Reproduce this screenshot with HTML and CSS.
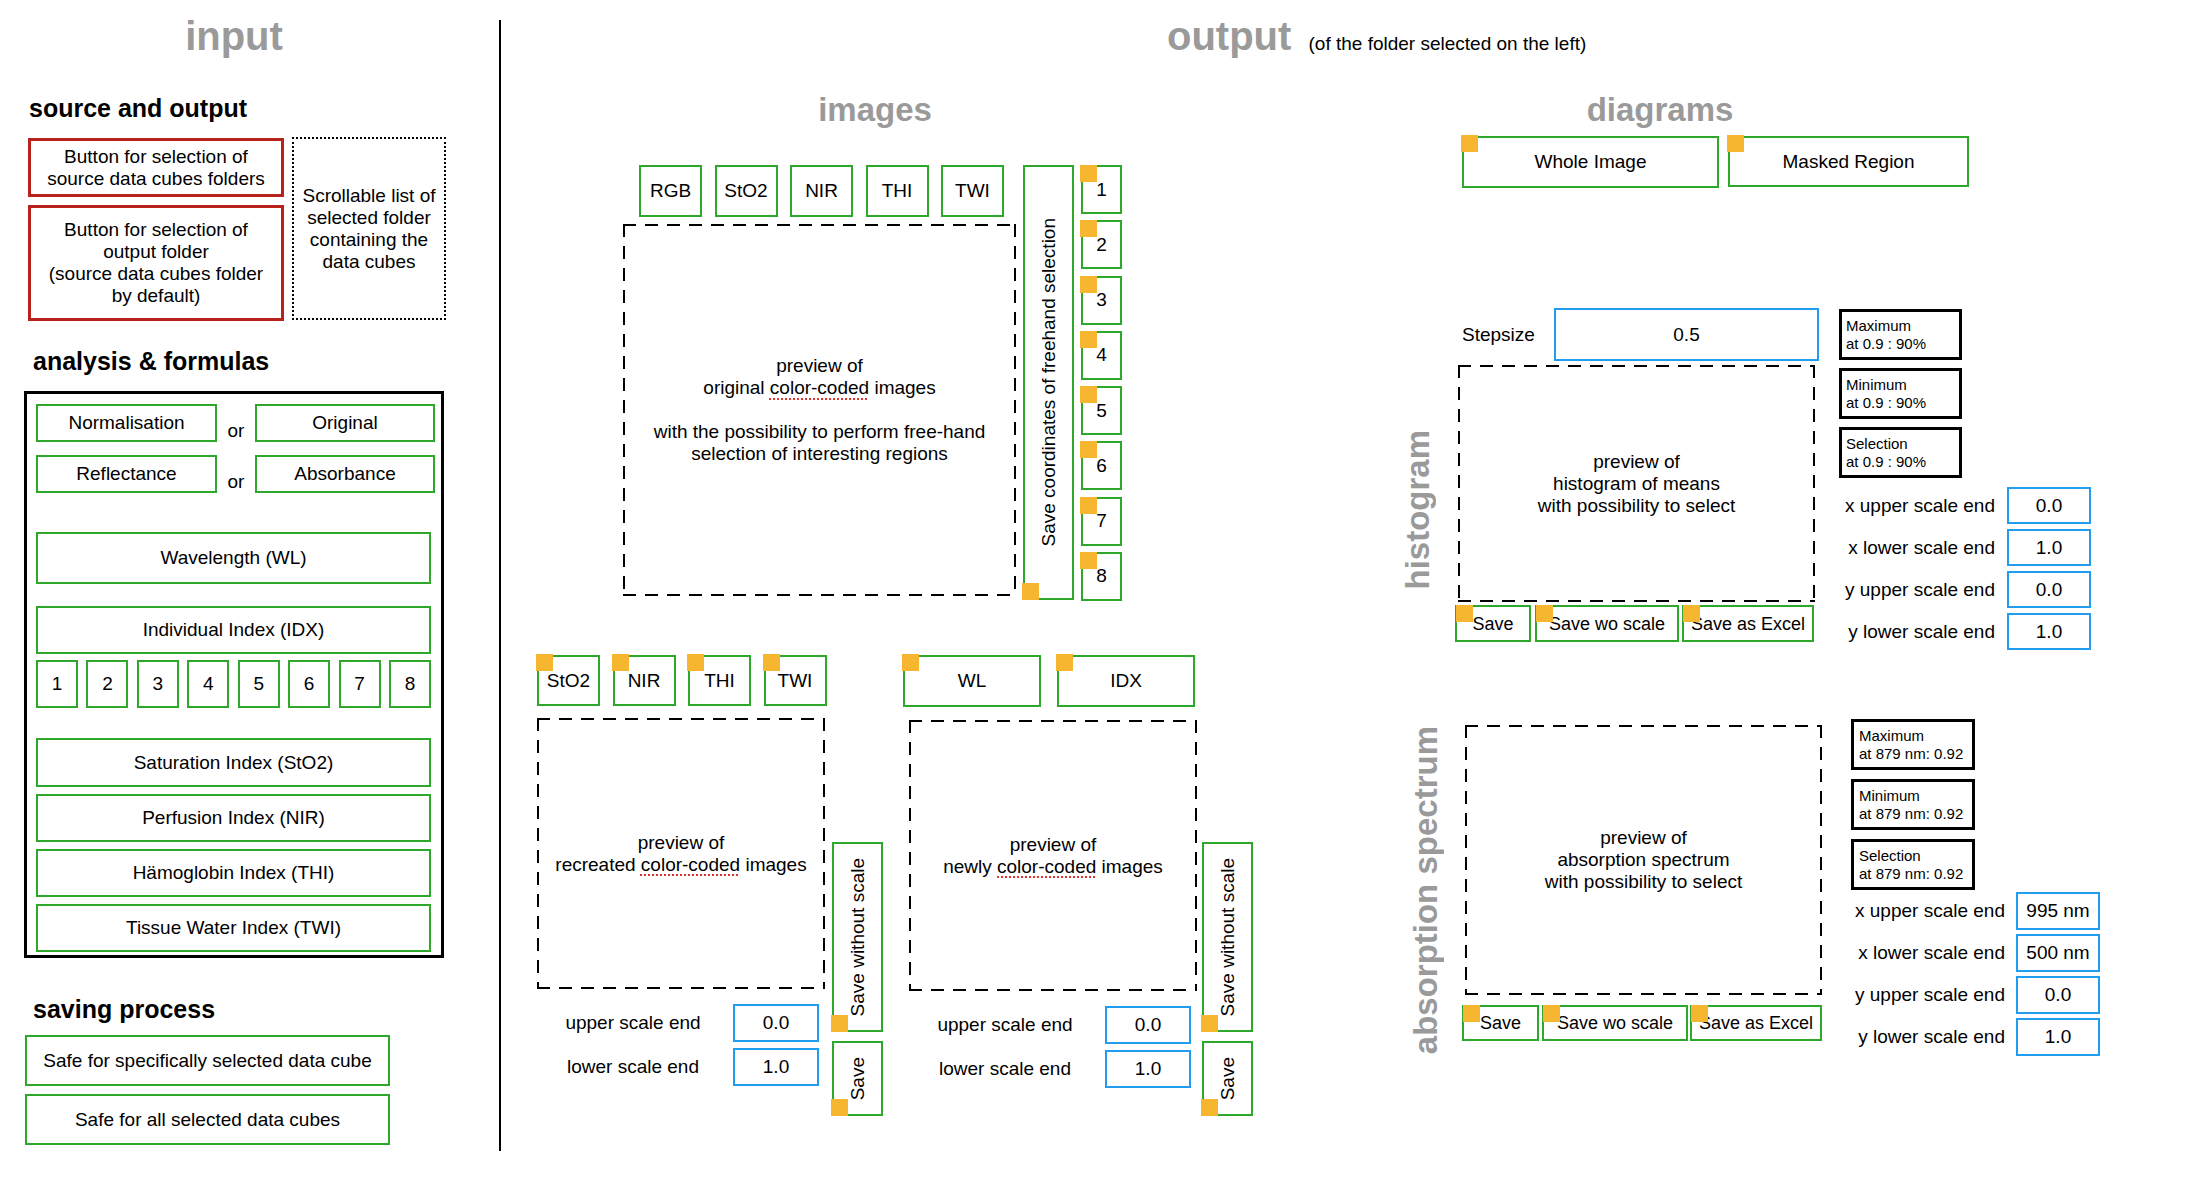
FILE: index.html
```html
<!DOCTYPE html>
<html lang="en">
<head>
  <meta charset="UTF-8">
  <title>Data Cube Viewer - Layout</title>
  <meta name="viewport" content="width=device-width,initial-scale=1">
  <link rel="stylesheet" href="styles.css">
</head>
<body>
<div class="page">

  <!-- left side: input -->
  <section class="input-col">
    <h1 class="title">input</h1>

    <h3 class="sect first">source and output</h3>
    <div class="source">
      <div class="source-btns">
        <div class="btn red src">Button for selection of<br>source data cubes folders</div>
        <div class="btn red dst">Button for selection of<br>output folder<br>(source data cubes folder<br>by default)</div>
      </div>
      <div class="folder-list">Scrollable list of<br>selected folder<br>containing the<br>data cubes</div>
    </div>

    <h3 class="sect">analysis &amp; formulas</h3>
    <div class="formulas">
      <div class="pair">
        <div class="btn green">Normalisation</div>
        <span class="or">or</span>
        <div class="btn green">Original</div>
      </div>
      <div class="pair second">
        <div class="btn green">Reflectance</div>
        <span class="or">or</span>
        <div class="btn green">Absorbance</div>
      </div>
      <div class="btn green wide wl">Wavelength (WL)</div>
      <div class="btn green wide idx">Individual Index (IDX)</div>
      <div class="idx-nums">
        <div class="btn green">1</div>
        <div class="btn green">2</div>
        <div class="btn green">3</div>
        <div class="btn green">4</div>
        <div class="btn green">5</div>
        <div class="btn green">6</div>
        <div class="btn green">7</div>
        <div class="btn green">8</div>
      </div>
      <div class="btn green wide index first-index">Saturation Index (StO2)</div>
      <div class="btn green wide index">Perfusion Index (NIR)</div>
      <div class="btn green wide index">Hämoglobin Index (THI)</div>
      <div class="btn green wide index">Tissue Water Index (TWI)</div>
    </div>

    <h3 class="sect saving">saving process</h3>
    <div class="btn green safe">Safe for specifically selected data cube</div>
    <div class="btn green safe second">Safe for all selected data cubes</div>
  </section>

  <div class="divider"></div>

  <!-- right side: output -->
  <section class="output-col">
    <h1 class="title out-title">output <span class="sub">(of the folder selected on the left)</span></h1>

    <div class="out-body">

      <div class="images">
        <h2 class="sub-title">images</h2>

        <div class="img-top">
          <div class="img-main">
            <div class="tabs">
              <div class="btn green tab">RGB</div>
              <div class="btn green tab">StO2</div>
              <div class="btn green tab">NIR</div>
              <div class="btn green tab">THI</div>
              <div class="btn green tab">TWI</div>
            </div>
            <div class="preview big">
              <p>preview of<br>original <span class="typo">color-coded</span> images<br><br>with the possibility to perform free-hand<br>selection of interesting regions</p>
            </div>
          </div>
          <div class="btn green vbtn coords"><span>Save coordinates of freehand selection</span><i class="mark bl"></i></div>
          <div class="num-col">
            <div class="btn green num"><i class="mark"></i>1</div>
            <div class="btn green num"><i class="mark"></i>2</div>
            <div class="btn green num"><i class="mark"></i>3</div>
            <div class="btn green num"><i class="mark"></i>4</div>
            <div class="btn green num"><i class="mark"></i>5</div>
            <div class="btn green num"><i class="mark"></i>6</div>
            <div class="btn green num"><i class="mark"></i>7</div>
            <div class="btn green num"><i class="mark"></i>8</div>
          </div>
        </div>

        <div class="img-bottom">
          <div class="grp grp-a">
            <div class="grp-main">
              <div class="tabs small-tabs">
                <div class="btn green tab2"><i class="mark"></i>StO2</div>
                <div class="btn green tab2"><i class="mark"></i>NIR</div>
                <div class="btn green tab2"><i class="mark"></i>THI</div>
                <div class="btn green tab2"><i class="mark"></i>TWI</div>
              </div>
              <div class="preview small">
                <p>preview of<br>recreated <span class="typo">color-coded</span> images</p>
              </div>
              <div class="scales">
                <span class="lbl">upper scale end</span><div class="field">0.0</div>
                <span class="lbl">lower scale end</span><div class="field">1.0</div>
              </div>
            </div>
            <div class="grp-side">
              <div class="btn green vbtn noscale"><span>Save without scale</span><i class="mark bl"></i></div>
              <div class="btn green vbtn save"><span>Save</span><i class="mark bl"></i></div>
            </div>
          </div>

          <div class="grp grp-b">
            <div class="grp-main">
              <div class="tabs wl-tabs">
                <div class="btn green tab3"><i class="mark"></i>WL</div>
                <div class="btn green tab3"><i class="mark"></i>IDX</div>
              </div>
              <div class="preview small">
                <p>preview of<br>newly <span class="typo">color-coded</span> images</p>
              </div>
              <div class="scales">
                <span class="lbl">upper scale end</span><div class="field">0.0</div>
                <span class="lbl">lower scale end</span><div class="field">1.0</div>
              </div>
            </div>
            <div class="grp-side">
              <div class="btn green vbtn noscale"><span>Save without scale</span><i class="mark bl"></i></div>
              <div class="btn green vbtn save"><span>Save</span><i class="mark bl"></i></div>
            </div>
          </div>
        </div>
      </div>

      <div class="diagrams">
        <h2 class="sub-title">diagrams</h2>

        <div class="diag-tabs">
          <div class="btn green whole"><i class="mark"></i>Whole Image</div>
          <div class="btn green masked"><i class="mark"></i>Masked Region</div>
        </div>

        <div class="chart hist">
          <div class="chart-label"><span>histogram</span></div>
          <div class="chart-main">
            <div class="step-row">
              <span class="step-lbl">Stepsize</span>
              <div class="field step">0.5</div>
            </div>
            <div class="preview chart-prev">
              <p>preview of<br>histogram of means<br>with possibility to select</p>
            </div>
            <div class="save-row">
              <div class="btn green s1"><i class="mark"></i>Save</div>
              <div class="btn green s2"><i class="mark"></i>Save wo scale</div>
              <div class="btn green s3"><i class="mark"></i>Save as Excel</div>
            </div>
          </div>
          <div class="chart-side">
            <div class="stats">
              <div class="stat">Maximum<br>at 0.9 : 90%</div>
              <div class="stat">Minimum<br>at 0.9 : 90%</div>
              <div class="stat">Selection<br>at 0.9 : 90%</div>
            </div>
            <div class="axis">
              <span class="lbl">x upper scale end</span><div class="field">0.0</div>
              <span class="lbl">x lower scale end</span><div class="field">1.0</div>
              <span class="lbl">y upper scale end</span><div class="field">0.0</div>
              <span class="lbl">y lower scale end</span><div class="field">1.0</div>
            </div>
          </div>
        </div>

        <div class="chart spectrum">
          <div class="chart-label"><span>absorption spectrum</span></div>
          <div class="chart-main">
            <div class="preview chart-prev">
              <p>preview of<br>absorption spectrum<br>with possibility to select</p>
            </div>
            <div class="save-row">
              <div class="btn green s1"><i class="mark"></i>Save</div>
              <div class="btn green s2"><i class="mark"></i>Save wo scale</div>
              <div class="btn green s3"><i class="mark"></i>Save as Excel</div>
            </div>
          </div>
          <div class="chart-side">
            <div class="stats">
              <div class="stat">Maximum<br>at 879 nm: 0.92</div>
              <div class="stat">Minimum<br>at 879 nm: 0.92</div>
              <div class="stat">Selection<br>at 879 nm: 0.92</div>
            </div>
            <div class="axis">
              <span class="lbl">x upper scale end</span><div class="field">995 nm</div>
              <span class="lbl">x lower scale end</span><div class="field">500 nm</div>
              <span class="lbl">y upper scale end</span><div class="field">0.0</div>
              <span class="lbl">y lower scale end</span><div class="field">1.0</div>
            </div>
          </div>
        </div>
      </div>

    </div>
  </section>
</div>
</body>
</html>
```

FILE: styles.css
```css
body { margin: 0; background: #fff; color: #000; font-family: "Liberation Sans", Arial, sans-serif; font-size: 19px; line-height: 22px; }
h1, h2, h3, p { margin: 0; }
.page { display: flex; width: 2196px; height: 1186px; overflow: hidden; }

/* generic boxes */
.btn { position: relative; display: flex; align-items: center; justify-content: center; text-align: center; box-sizing: border-box; }
.green { border: 2px solid #2ea82a; }
.red { border: 3px solid #b9221c; }
.field { display: flex; align-items: center; justify-content: center; box-sizing: border-box; border: 2px solid #229cf0; height: 38px; }
.mark { position: absolute; top: -3px; left: -3px; width: 17px; height: 17px; background: #f6b62f; }
.mark.bl { top: auto; bottom: -2px; }
.vbtn span { writing-mode: vertical-rl; transform: rotate(180deg); white-space: nowrap; }

.preview {
  display: flex; align-items: center; justify-content: center; text-align: center; box-sizing: border-box;
  background:
    linear-gradient(90deg, #000 13px, transparent 13px) top left / 22px 2px repeat-x,
    linear-gradient(90deg, #000 13px, transparent 13px) bottom left / 22px 2px repeat-x,
    linear-gradient(#000 13px, transparent 13px) top left / 2px 22px repeat-y,
    linear-gradient(#000 13px, transparent 13px) top right / 2px 22px repeat-y;
}
.typo { text-decoration: underline dotted #e0342c; text-decoration-thickness: 1.5px; text-underline-offset: 4px; }

/* titles */
.title { padding-top: 12px; font-size: 40px; line-height: 48px; font-weight: bold; color: #9a9a9a; }
.sub-title { margin-top: 30px; font-size: 33px; line-height: 40px; font-weight: bold; color: #9a9a9a; text-align: center; }
.sect { margin: 25px 0 15px 9px; font-size: 25px; line-height: 30px; font-weight: bold; }
.sect.first { margin: 33px 0 14px 5px; }
.sect.saving { margin: 36px 0 11px 9px; }

/* input column */
.input-col { width: 499px; flex-shrink: 0; padding-left: 24px; box-sizing: border-box; }
.input-col .title { width: 420px; text-align: center; }
.source { display: flex; margin-left: 4px; }
.source-btns { display: flex; flex-direction: column; gap: 8px; margin-top: 1px; }
.src { width: 256px; height: 59px; }
.dst { width: 256px; height: 116px; }
.folder-list { display: flex; align-items: center; justify-content: center; text-align: center; margin-left: 8px; width: 154px; height: 183px; box-sizing: border-box; border: 2px dotted #000; }

.formulas { width: 420px; box-sizing: border-box; border: 3px solid #000; padding: 10px 6px 3px 9px; }
.pair { display: grid; grid-template-columns: 181px 1fr 180px; height: 38px; }
.pair.second { margin-top: 13px; }
.or { align-self: end; text-align: center; }
.wide { width: 395px; height: 48px; margin-top: 7px; }
.wl { height: 52px; margin-top: 39px; }
.idx { margin-top: 22px; }
.idx-nums { display: flex; justify-content: space-between; width: 395px; margin-top: 6px; }
.idx-nums .btn { width: 42px; height: 48px; }
.first-index { margin-top: 30px; height: 49px; }
.safe { width: 365px; height: 51px; margin-left: 1px; }
.safe.second { margin-top: 8px; }

.divider { width: 2px; height: 1131px; margin-top: 20px; background: #000; flex-shrink: 0; }

/* output column */
.output-col { flex: 1; }
.out-title { padding-left: 666px; }
.out-title .sub { margin-left: 6px; font-size: 19px; line-height: 22px; font-weight: normal; color: #000; }
.out-body { display: flex; }

.images { width: 676px; margin-left: 36px; flex-shrink: 0; }
.img-top { display: flex; gap: 7px; margin: 35px 0 0 86px; }
.img-main { width: 393px; }
.tabs { display: flex; gap: 12.5px; margin-left: 16px; }
.tab { width: 63px; height: 52px; }
.preview.big { width: 393px; height: 372px; margin-top: 7px; }
.coords { width: 51px; height: 435px; }
.num-col { display: flex; flex-direction: column; justify-content: space-between; height: 436px; }
.num { width: 41px; height: 49px; }
.num .mark { top: -2px; }

.img-bottom { display: flex; gap: 20px; margin-top: 54px; }
.grp { display: flex; gap: 5px; }
.grp-a .grp-main { width: 290px; }
.grp-b .grp-main { width: 294px; }
.small-tabs { margin-left: 0; }
.tab2 { width: 63px; height: 51px; }
.wl-tabs { margin-left: 0; gap: 16px; }
.tab3 { width: 138px; height: 52px; }
.preview.small { width: 288px; height: 271px; margin-top: 12px; }
.grp-b .preview.small { margin: 13px 0 0 6px; }
.scales { display: grid; grid-template-columns: 192px 86px; column-gap: 4px; row-gap: 6px; margin-top: 15px; }
.grp-b .scales { margin-left: 6px; }
.scales .lbl { align-self: center; text-align: center; }
.grp-side { display: flex; flex-direction: column; gap: 9px; margin-top: 187px; }
.noscale { width: 51px; height: 190px; }
.save { width: 51px; height: 75px; }

/* diagrams */
.diagrams { width: 700px; margin-left: 187px; flex-shrink: 0; }
.diagrams .sub-title { width: 520px; }
.diag-tabs { display: flex; gap: 9px; margin: 6px 0 0 62px; }
.whole { width: 257px; height: 52px; }
.masked { width: 241px; height: 51px; }

.chart { display: flex; }
.chart.hist { margin-top: 120px; }
.chart.spectrum { margin-top: 69px; }
.chart-label { display: flex; flex-direction: column; justify-content: center; box-sizing: border-box; font-size: 33px; line-height: 33px; font-weight: bold; color: #9a9a9a; }
.chart-label span { writing-mode: vertical-rl; transform: rotate(180deg); white-space: nowrap; }
.hist .chart-label { width: 55px; padding: 61px 0 0 1px; }
.spectrum .chart-label { width: 64px; padding: 6px 0 0 9px; }

.hist .chart-main { width: 364px; }
.spectrum .chart-main { width: 360px; margin-top: 6px; }
.step-row { display: flex; align-items: center; height: 53px; margin-left: 7px; }
.step-lbl { width: 92px; }
.field.step { width: 265px; height: 53px; }
.chart-prev { width: 357px; margin-left: 3px; }
.hist .chart-prev { height: 237px; margin-top: 4px; }
.spectrum .chart-prev { height: 270px; }
.save-row { display: flex; font-size: 18px; }
.hist .save-row { margin-top: 3px; }
.spectrum .save-row { margin-top: 10px; }
.save-row .btn { height: 37px; }
.save-row .mark { top: -2px; left: -1px; }
.hist .s1 { width: 76px; }
.hist .s2 { width: 144px; margin-left: 4px; }
.hist .s3 { width: 132px; margin-left: 3px; }
.spectrum .save-row .btn { height: 36px; }
.spectrum .s1 { width: 77px; }
.spectrum .s2 { width: 146px; margin-left: 3px; }
.spectrum .s3 { width: 132px; margin-left: 2px; }

.stats { display: flex; flex-direction: column; }
.stat { display: flex; flex-direction: column; justify-content: center; box-sizing: border-box; height: 51px; padding-left: 4px; border: 3px solid #000; font-size: 15px; line-height: 18px; }
.hist .chart-side { margin-left: 20px; }
.hist .stats { gap: 8px; margin-top: 1px; }
.hist .stat { width: 123px; }
.spectrum .chart-side { margin-left: 29px; }
.spectrum .stats { gap: 9px; }
.spectrum .stat { width: 124px; padding-left: 5px; }

.axis { display: grid; }
.axis .lbl { align-self: center; text-align: right; white-space: nowrap; }
.hist .axis { grid-template-columns: 156px 84px; column-gap: 12px; row-gap: 5px; margin-top: 9px; }
.hist .axis .field { height: 37px; }
.spectrum .axis { grid-template-columns: 154px 84px; column-gap: 11px; row-gap: 4px; margin-top: 2px; }
```
